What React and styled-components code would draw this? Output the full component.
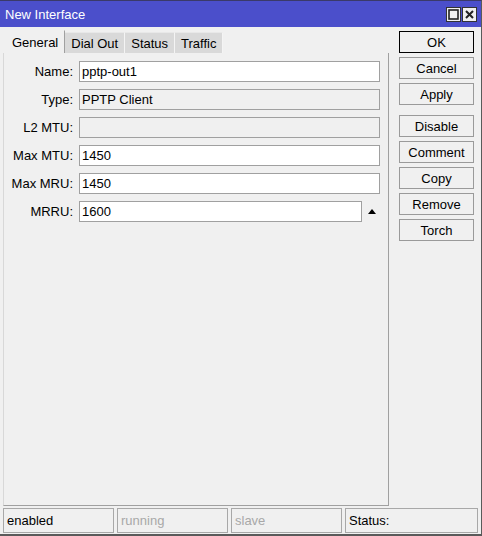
import React from "react";
import styled, { createGlobalStyle } from "styled-components";

const GlobalStyle = createGlobalStyle`
  html, body {
    margin: 0;
    padding: 0;
    background: #f0f0f0;
  }
  body {
    font-family: "Liberation Sans", Arial, sans-serif;
    font-size: 13px;
    color: #000;
  }
`;

const Window = styled.div`
  width: 482px;
  height: 536px;
  box-sizing: border-box;
  display: flex;
  flex-direction: column;
  background: #f0f0f0;
  border-top: 1px solid #3a3a6a;
  border-right: 1px solid #5a5a5a;
  border-bottom: 2px solid #5a5a5a;
  overflow: hidden;
`;

const TitleBar = styled.div`
  height: 26px;
  flex-shrink: 0;
  background: #4b4fcb;
  display: flex;
  align-items: center;
  justify-content: space-between;
  padding: 0 4px 0 5px;
  color: #fff;
  font-size: 13px;
`;

const TitleButtons = styled.div`
  display: flex;
  gap: 1px;
`;

const TitleButton = styled.div`
  width: 15px;
  height: 15px;
  box-sizing: border-box;
  background: #f0f0f0;
  border: 1px solid #333;
  display: flex;
  align-items: center;
  justify-content: center;
`;

const Body = styled.div`
  flex: 1;
  display: flex;
  padding: 3px 0 0 3px;
  gap: 10px;
  min-height: 0;
`;

const Main = styled.div`
  width: 386px;
  display: flex;
  flex-direction: column;
`;

const Tabs = styled.div`
  display: flex;
  align-items: flex-end;
  height: 23px;
  padding-left: 3px;
`;

const Tab = styled.div`
  height: ${p => (p.$active ? "23px" : "21px")};
  box-sizing: border-box;
  padding: 0 6px;
  display: flex;
  align-items: center;
  background: ${p => (p.$active ? "#f0f0f0" : "#d9d9d9")};
  border-right: 1px solid ${p => (p.$active ? "#a0a0a0" : "#f4f4f4")};
  border-top: 1px solid ${p => (p.$active ? "#f0f0f0" : "#e8e8e8")};
  font-size: 13px;
`;

const Panel = styled.div`
  flex: 1;
  box-sizing: border-box;
  border-left: 1px solid #d8d8d8;
  border-right: 1px solid #a0a0a0;
  border-bottom: 1px solid #a0a0a0;
  padding: 8px 8px 0 0;
  display: flex;
  flex-direction: column;
  gap: 7px;
`;

const Row = styled.div`
  display: flex;
  align-items: center;
  height: 21px;
`;

const Label = styled.div`
  width: 75px;
  box-sizing: border-box;
  text-align: right;
  padding-right: 6px;
  flex-shrink: 0;
`;

const Field = styled.div`
  flex: ${p => (p.$narrow ? "0 0 283px" : "1")};
  height: 21px;
  box-sizing: border-box;
  border: 1px solid #a0a0a0;
  background: ${p => (p.$readonly ? "#f0f0f0" : "#fff")};
  display: flex;
  align-items: center;
  padding-left: 2px;
`;

const Spin = styled.div`
  margin-left: 6px;
  width: 0;
  height: 0;
  border-left: 4px solid transparent;
  border-right: 4px solid transparent;
  border-bottom: 5px solid #000;
`;

const Side = styled.div`
  display: flex;
  flex-direction: column;
  padding-top: 1px;
  gap: 4px;
`;

const Button = styled.div`
  width: 75px;
  height: 22px;
  box-sizing: border-box;
  border: 1px solid ${p => (p.$default ? "#000" : "#9a9a9a")};
  background: #f0f0f0;
  display: flex;
  align-items: center;
  justify-content: center;
  font-size: 13px;
  margin-top: ${p => (p.$spaced ? "6px" : "0")};
`;

const StatusBar = styled.div`
  height: 28px;
  flex-shrink: 0;
  display: flex;
  gap: 3px;
  padding: 2px 3px 1px 3px;
  box-sizing: border-box;
`;

const StatusCell = styled.div`
  flex: ${p => (p.$wide ? "0 0 133px" : "0 0 111px")};
  box-sizing: border-box;
  border: 1px solid #a8a8a8;
  display: flex;
  align-items: center;
  padding-left: 3px;
  color: ${p => (p.$dim ? "#a8a8a8" : "#000")};
`;

const fields = [
  { label: "Name:", value: "pptp-out1" },
  { label: "Type:", value: "PPTP Client", readonly: true },
  { label: "L2 MTU:", value: "", readonly: true },
  { label: "Max MTU:", value: "1450" },
  { label: "Max MRU:", value: "1450" },
];

const buttons = ["OK", "Cancel", "Apply", "Disable", "Comment", "Copy", "Remove", "Torch"];

export default function App() {
  return (
    <>
      <GlobalStyle />
      <Window>
        <TitleBar>
          <span>New Interface</span>
          <TitleButtons>
            <TitleButton>
              <svg width="11" height="11" viewBox="0 0 11 11">
                <rect x="1" y="1" width="9" height="9" fill="none" stroke="#222" strokeWidth="1.6" />
              </svg>
            </TitleButton>
            <TitleButton>
              <svg width="11" height="11" viewBox="0 0 11 11">
                <path d="M2 2 L9 9 M9 2 L2 9" stroke="#222" strokeWidth="2" />
              </svg>
            </TitleButton>
          </TitleButtons>
        </TitleBar>
        <Body>
          <Main>
            <Tabs>
              <Tab $active>General</Tab>
              <Tab>Dial Out</Tab>
              <Tab>Status</Tab>
              <Tab>Traffic</Tab>
            </Tabs>
            <Panel>
              {fields.map(f => (
                <Row key={f.label}>
                  <Label>{f.label}</Label>
                  <Field $readonly={f.readonly}>{f.value}</Field>
                </Row>
              ))}
              <Row>
                <Label>MRRU:</Label>
                <Field $narrow>1600</Field>
                <Spin />
              </Row>
            </Panel>
          </Main>
          <Side>
            {buttons.map(b => (
              <Button key={b} $default={b === "OK"} $spaced={b === "Disable"}>
                {b}
              </Button>
            ))}
          </Side>
        </Body>
        <StatusBar>
          <StatusCell>enabled</StatusCell>
          <StatusCell $dim>running</StatusCell>
          <StatusCell $dim>slave</StatusCell>
          <StatusCell $wide>Status:</StatusCell>
        </StatusBar>
      </Window>
    </>
  );
}
